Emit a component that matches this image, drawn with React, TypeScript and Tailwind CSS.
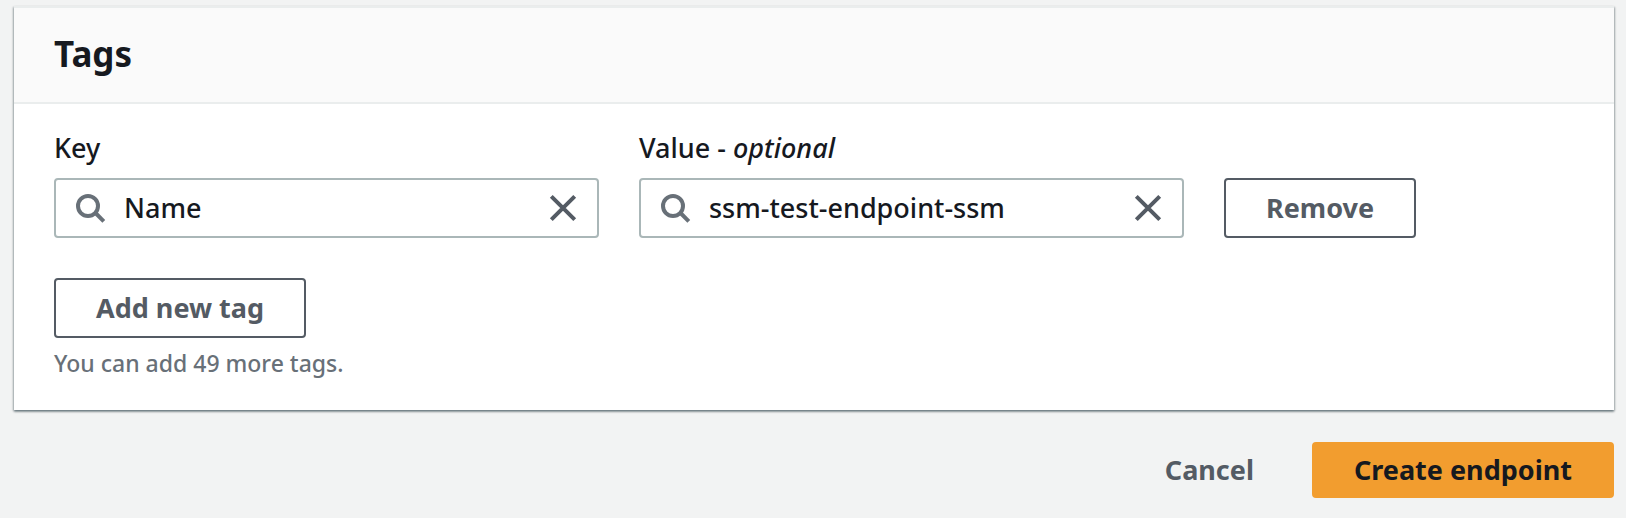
import { useState } from "react";
import type { ReactNode } from "react";

function SearchIcon() {
  return (
    <svg className="h-8 w-8 shrink-0" viewBox="0 0 32 32" fill="none" stroke="#687078" strokeWidth="4" aria-hidden="true">
      <circle cx="14" cy="14" r="10" />
      <path d="M21 20.5l8.8 8.8" />
    </svg>
  );
}

function CloseIcon() {
  return (
    <svg className="h-8 w-8" viewBox="0 0 32 32" fill="none" stroke="#545b64" strokeWidth="4" aria-hidden="true">
      <path d="M4.3 4.3l23.4 23.4M27.7 4.3l-23.4 23.4" />
    </svg>
  );
}

type TagFieldProps = {
  id: string;
  label: ReactNode;
  value: string;
  onChange: (value: string) => void;
};

function TagField({ id, label, value, onChange }: TagFieldProps) {
  return (
    <div className="col-span-3">
      <label htmlFor={id} className="mb-2.5 block leading-10">
        {label}
      </label>
      <div className="flex h-15 items-center gap-[18px] rounded-sm border-2 border-[#aab7b8] bg-white px-[18px]">
        <SearchIcon />
        <input
          id={id}
          type="text"
          className="w-full min-w-0 flex-1 bg-transparent outline-none"
          value={value}
          onChange={(e) => onChange(e.target.value)}
        />
        <button type="button" aria-label="Clear" className="shrink-0" onClick={() => onChange("")}>
          <CloseIcon />
        </button>
      </div>
    </div>
  );
}

export default function App() {
  const [tagKey, setTagKey] = useState("Name");
  const [tagValue, setTagValue] = useState("ssm-test-endpoint-ssm");

  return (
    <main className="min-h-screen bg-[#f2f3f3] pt-1.5 pr-3 pb-5 pl-3.5 font-['Noto_Sans',sans-serif] text-[27px] font-medium text-[#16191f]">
      <section className="border-t-2 border-[#eaeded] bg-white shadow-[0_2px_2px_rgba(0,28,36,0.3),1px_1px_2px_rgba(0,28,36,0.25),-1px_1px_2px_rgba(0,28,36,0.25)]">
        <header className="border-b-2 border-[#eaeded] bg-[#fafafa] px-10 pt-6 pb-[26px]">
          <h2 className="text-[35px] leading-11 font-bold">Tags</h2>
        </header>
        <div className="px-10 pt-6 pb-[30px]">
          <div className="grid grid-cols-8 items-end gap-10">
            <TagField id="tag-key" label="Key" value={tagKey} onChange={setTagKey} />
            <TagField
              id="tag-value"
              label={
                <>
                  Value - <i>optional</i>
                </>
              }
              value={tagValue}
              onChange={setTagValue}
            />
            <div className="col-span-2">
              <button type="button" className="block h-15 rounded-sm border-2 border-[#545b64] px-10 font-bold text-[#545b64]">
                Remove
              </button>
            </div>
          </div>
          <button type="button" className="mt-10 block h-15 rounded-sm border-2 border-[#545b64] px-10 font-bold text-[#545b64]">
            Add new tag
          </button>
          <p className="mt-2 text-[23px] leading-[34px] text-[#687078]">You can add 49 more tags.</p>
        </div>
      </section>
      <div className="mt-8 flex justify-end gap-4">
        <button type="button" className="h-14 rounded-sm border-2 border-transparent px-10 font-bold text-[#545b64]">
          Cancel
        </button>
        <button type="button" className="h-14 rounded-sm border-2 border-[#f29d2f] bg-[#f29d2f] px-10 font-bold">
          Create endpoint
        </button>
      </div>
    </main>
  );
}
